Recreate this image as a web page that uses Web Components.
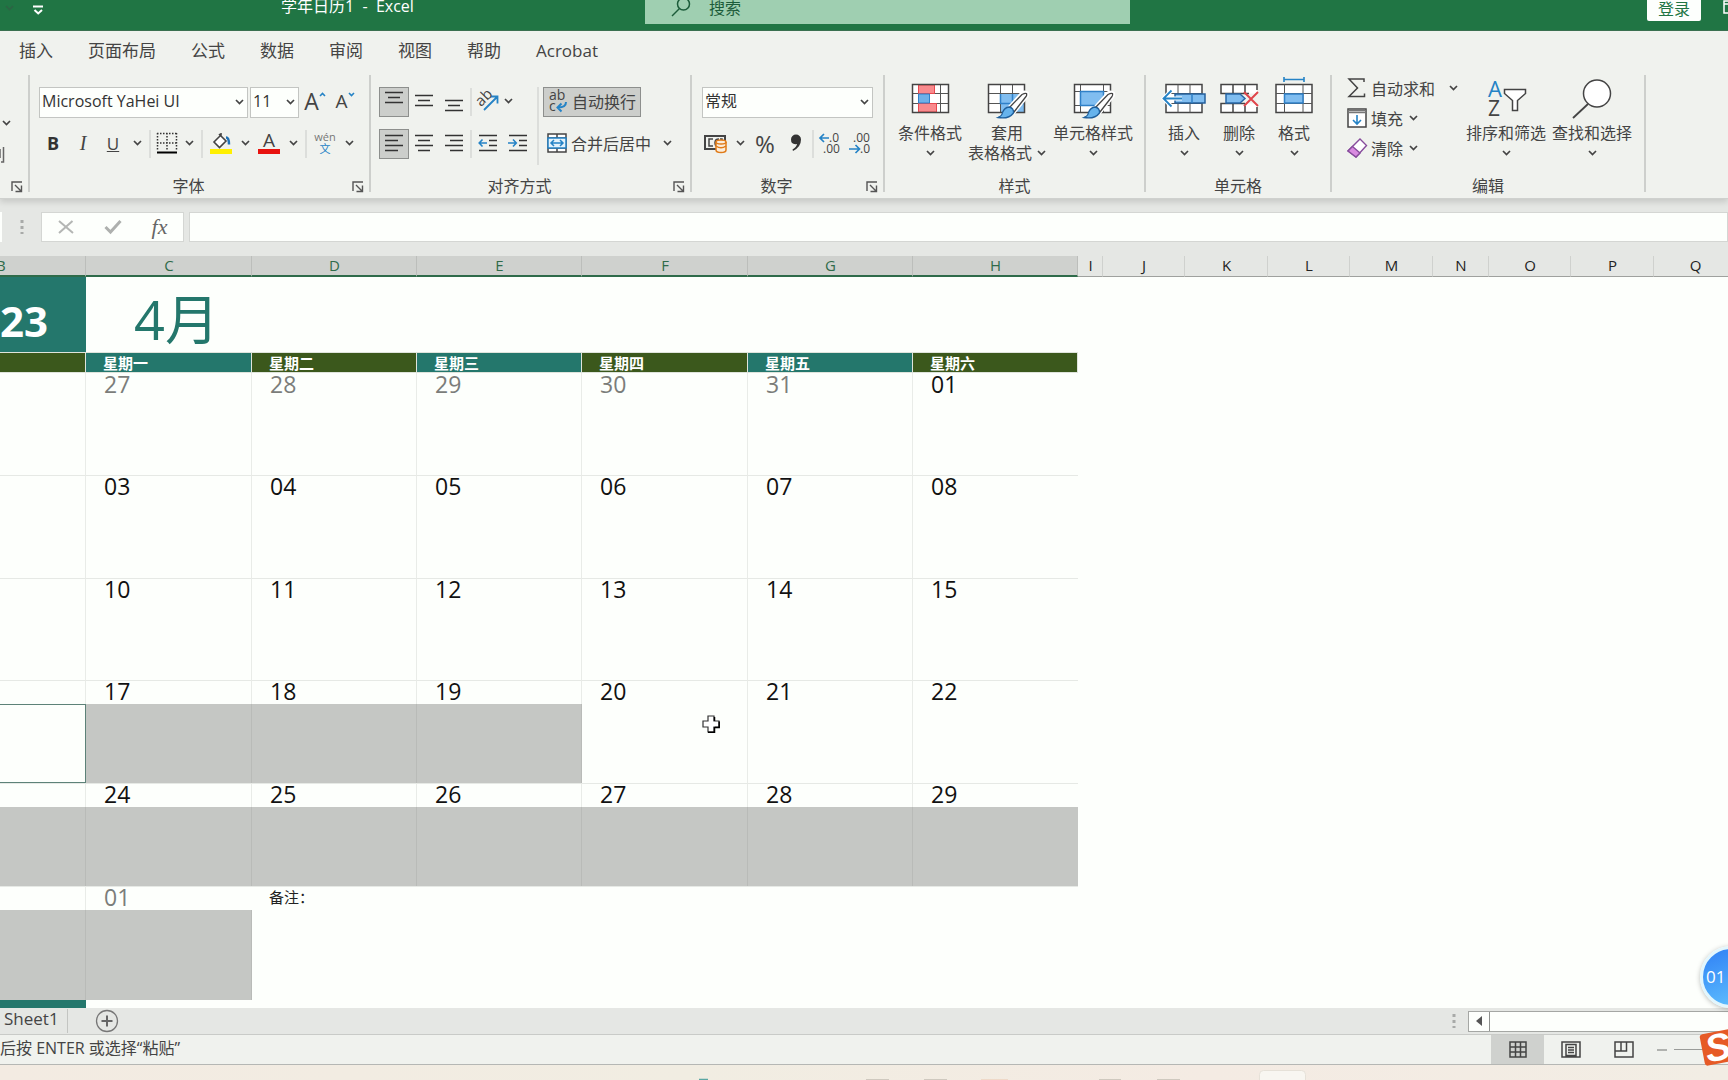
<!DOCTYPE html>
<html lang="zh-CN">
<head>
<meta charset="utf-8">
<title>学年日历1 - Excel</title>
<style>
html,body{margin:0;height:100%;overflow:hidden}
body{font-family:"Open Sans","Noto Sans CJK SC",sans-serif;font-size:16px;color:#444}
</style>
</head>
<body>
<excel-app></excel-app>
<script>
const ICONS = {
  chev: [9,6,'<path d="M1 1l3.500 3.500L8 1" stroke="#444" stroke-width="1.700"/>'],
  grow: [7,5,'<path d="M1 4l2.500-2.500L6 4" stroke="#2583c6" stroke-width="1.600"/>'],
  shrink: [7,5,'<path d="M1 1l2.500 2.500L6 1" stroke="#2583c6" stroke-width="1.600"/>'],
  qat: [11,10,'<path d="M0 1.500h10M1.500 5l3.700 3.500L9 5" stroke="#fff" stroke-width="2"/>'],
  search: [20,20,'<circle cx="12.500" cy="7" r="6" stroke="#1c5c3a" stroke-width="1.500"/><path d="M8.500 11.500L1 19" stroke="#1c5c3a" stroke-width="1.500"/>'],
  win: [14,14,'<path d="M1 1h13v12H1zM1 4h13" stroke="#fff" stroke-width="1.500"/>'],
  launch: [12,12,'<path d="M1 10V1h10M4 4l6 6M10.500 4.500v6h-6" stroke="#555" stroke-width="1.400"/>'],
  brush: [5,16,'<path d="M3.500 0v15H1M0 2v9" stroke="#666" stroke-width="1.500"/>'],
  borders: [22,22,'<path d="M1 1.500h20M1 11h20M1.500 1v18M11 1v18M20.500 1v18" stroke="#333" stroke-width="1.500" stroke-dasharray="1.500 1.500"/><path d="M1 20.500h20" stroke="#000" stroke-width="2"/>'],
  fill: [22,22,'<path d="M9 2l7 7-6.500 6.500L4 10l7-7V1" stroke="#444" stroke-width="1.600" fill="#fff"/><path d="M16 5.500q3 0 3 7" stroke="#1f72b8" stroke-width="2.500"/><path d="M0 17h22v5H0z" fill="#fff000"/>'],
  top: [20,20,'<path d="M1 1.500h18M4 6.500h12M1 11.500h18" stroke="#333" stroke-width="1.500"/>'],
  mid: [20,20,'<path d="M1 4.500h18M4 9.500h12M1 14.500h18" stroke="#333" stroke-width="1.500"/>'],
  bot: [20,20,'<path d="M1 9.500h18M4 14.500h12M1 19.500h18" stroke="#333" stroke-width="1.500"/>'],
  left: [20,20,'<path d="M1 2.500h18M1 7.500h13M1 12.500h18M1 17.500h13" stroke="#333" stroke-width="1.500"/>'],
  center: [20,20,'<path d="M1 2.500h18M4 7.500h12M1 12.500h18M4 17.500h12" stroke="#333" stroke-width="1.500"/>'],
  right: [20,20,'<path d="M1 2.500h18M6 7.500h13M1 12.500h18M6 17.500h13" stroke="#333" stroke-width="1.500"/>'],
  outdent: [20,20,'<path d="M1 2.500h18M11 7.500h8M11 12.500h8M1 17.500h18" stroke="#333" stroke-width="1.500"/><path d="M9 10H1.500M4.500 6.500L1.200 10l3.300 3.500" stroke="#2583c6" stroke-width="1.600"/>'],
  indent: [20,20,'<path d="M1 2.500h18M11 7.500h8M11 12.500h8M1 17.500h18" stroke="#333" stroke-width="1.500"/><path d="M0 10h8M5 6.500L8.300 10 5 13.500" stroke="#2583c6" stroke-width="1.600"/>'],
  orient: [24,24,'<path d="M8 21L21 8M14.500 7.500h7v7" stroke="#2583c6" stroke-width="1.800"/><text x="2" y="17" transform="rotate(-45 5 14)" font-size="15" fill="#444">ab</text>'],
  wrap: [20,22,'<text x="1" y="10" font-size="14" fill="#444">ab</text><text x="1" y="21" font-size="14" fill="#444">c</text><path d="M18 12q0 5.500-8 5.500M13.500 13.500l-4 4 4 4" stroke="#2583c6" stroke-width="2"/>'],
  merge: [20,20,'<path d="M1 1h18v18H1zM1 5h18M1 15h18M10 1v4M10 15v4" stroke="#444" stroke-width="1.500" fill="#fff"/><path d="M1 5h18v10H1z" stroke="#2583c6" stroke-width="1.500" fill="#e3f2fb"/><path d="M4 10h12M7 7l-3 3 3 3M13 7l3 3-3 3" stroke="#2583c6" stroke-width="1.500"/>'],
  money: [24,20,'<path d="M1 3h20v13H1z" stroke="#444" stroke-width="2"/><path d="M9 6H5v7h4M15 6q-4 0-4 3.500t2 3.500M16 6h2v2" stroke="#444" stroke-width="1.500"/><path d="M12 9v8q0 2.500 5 2.500t5-2.500V9" fill="#fbeedd" stroke="#e07b18" stroke-width="1.500"/><ellipse cx="17" cy="9" rx="5" ry="2" fill="#fbeedd" stroke="#e07b18" stroke-width="1.500"/><path d="M12 13q5 3.500 10 0" stroke="#e07b18" stroke-width="1.500"/>'],
  comma: [12,18,'<path d="M1 5.500a5 5 0 0 1 10 0Q11 13 3 17L2.500 15.500Q6.500 13 7 10 1 11 1 5.500z" fill="#333"/>'],
  decinc: [22,22,'<path d="M10 6H1M5 2L1 6l4 4" stroke="#2583c6" stroke-width="1.700"/><text x="10" y="10" font-size="12" fill="#444">.0</text><text x="4" y="21" font-size="12" fill="#444">.00</text>'],
  decdec: [22,22,'<path d="M0 17h10M6.500 13l4 4-4 4" stroke="#2583c6" stroke-width="1.700"/><text x="4" y="10" font-size="12" fill="#444">.00</text><text x="11" y="21" font-size="12" fill="#444">.0</text>'],
  cond: [44,40,'<path d="M4.500 6.500h36v28h-36z" fill="#fff"/><path d="M10.500 6.500v28M32.500 6.500v28M4.500 15.500h36M4.500 25.500h36" stroke="#555"/><path d="M10.500 7h16v8.500h-16zM10.500 25.500h18V34h-18z" fill="#f98a8d" stroke="#e8484f"/><path d="M10.500 16h11v9h-11z" fill="#6fb0e8" stroke="#2f80c8"/><path d="M4.500 6.500h36v28h-36z" stroke="#444" stroke-width="1.500"/>'],
  tablefmt: [44,40,'<path d="M3.500 6.500h36v28h-36z" fill="#fff"/><path d="M15 16h24.500v18.500H15z" fill="#80bdf0"/><path d="M15.500 6.500v28M27.500 6.500v28M3.500 15.500h36M3.500 25.500h36" stroke="#555"/><path d="M15.500 16v9.500h24M27.500 16v18" stroke="#2f80c8" stroke-width="1.500"/><path d="M3.500 6.500h36v28h-36z" stroke="#444" stroke-width="1.500"/><path d="M24 30L37 15.500q3-2 5 0 .5 2-1 3.500L29 34z" fill="#fff" stroke="#fff" stroke-width="4"/><path d="M24 30L37 16.500q3-1.500 4.500-1 .5 2-.5 3L29 34z" fill="#fff" stroke="#444" stroke-width="1.300"/><path d="M24 29q5 1 4.500 6-5 6.500-15.500 4.500 4-1.500 4.500-5 2-5 6.500-5.500z" fill="#66b3ec" stroke="#1f5f9c" stroke-width="1.300"/>'],
  cellstyle: [44,40,'<path d="M3.500 6.500h36v28h-36z" fill="#fff"/><path d="M9.500 6.500v28M32.500 6.500v28M3.500 13.500h36M3.500 27.500h36" stroke="#555"/><path d="M9.500 13.500h23v14h-23z" fill="#80bdf0" stroke="#2f80c8" stroke-width="1.500"/><path d="M3.500 6.500h36v28h-36z" stroke="#444" stroke-width="1.500"/><path d="M24 30L37 15.500q3-2 5 0 .5 2-1 3.500L29 34z" fill="#fff" stroke="#fff" stroke-width="4"/><path d="M24 30L37 16.500q3-1.500 4.500-1 .5 2-.5 3L29 34z" fill="#fff" stroke="#444" stroke-width="1.300"/><path d="M24 29q5 1 4.500 6-5 6.500-15.500 4.500 4-1.500 4.500-5 2-5 6.500-5.500z" fill="#66b3ec" stroke="#1f5f9c" stroke-width="1.300"/>'],
  insert: [44,40,'<path d="M4 6.500h36v28H4z" fill="#fff" stroke="#444" stroke-width="1.500"/><path d="M16 6.500v28M28 6.500v28M4 15.500h36M4 25.500h36" stroke="#555"/><path d="M13 16h30v9H13z" fill="#80bdf0" stroke="#24609c" stroke-width="1.500"/><path d="M30 16v9" stroke="#2f80c8" stroke-width="1.500"/><path d="M2 20.500h18M9.500 12.500l-8 8 8 8" stroke="#fff" stroke-width="4"/><path d="M2 20.500h18M9.500 12.500l-8 8 8 8" stroke="#2583c6" stroke-width="1.800"/>'],
  del: [44,40,'<path d="M4 6.500h36v9H4zM4 25.500h36v9H4z" fill="#fff"/><path d="M40 12V6.500H4v9h28M40 29v5.500H4v-9h24M16 6.500v9M28 6.500v9M16 25.500v9M28 28v6" stroke="#444" stroke-width="1.500"/><path d="M9 16h14l5 4.500-5 4.500H9z" fill="#80bdf0" stroke="#2868a8" stroke-width="1.500"/><path d="M27 14l14 14M41 14L27 28" stroke="#e0454b" stroke-width="2"/>'],
  format: [44,40,'<path d="M4 6.500h36v28H4z" fill="#fff" stroke="#444" stroke-width="1.500"/><path d="M12.500 6.500v28M31 6.500v28M4 15.500h36M4 25.500h36" stroke="#555"/><path d="M12.500 16H31v9H12.500z" fill="#80bdf0" stroke="#2f80c8" stroke-width="1.500"/><path d="M12 1.500h20M12 -1v5M32 -1v5" stroke="#2583c6" stroke-width="1.600"/>'],
  sigma: [20,20,'<path d="M17 4V1H2l8.500 9L2 18.500h15.500v-3" stroke="#444" stroke-width="1.500"/>'],
  filldown: [20,20,'<path d="M1 1h18v18H1z" fill="#fff" stroke="#444" stroke-width="1.500"/><path d="M1 4.500h18M1 2.500h18" stroke="#777" stroke-width="1.500"/><path d="M10 7v9M6 12l4 4 4-4" stroke="#2583c6" stroke-width="1.600"/>'],
  eraser: [20,20,'<path d="M13 1l6.500 6.500L9 19l-8-6z" fill="#fff" stroke="#874c9c" stroke-width="1.400"/><path d="M5.500 8.500L13 15 9 19l-8-6z" fill="#d98be0" stroke="#874c9c" stroke-width="1.400"/>'],
  sort: [44,40,'<text x="4" y="19" font-size="22" fill="#2583c6">A</text><text x="4" y="38" font-size="21" fill="#444">Z</text><path d="M20.500 11.500h21v4l-8 7v10h-5v-10l-8-7z" fill="#fff" stroke="#444" stroke-width="1.500"/>'],
  find: [44,40,'<circle cx="27" cy="15.500" r="13.500" fill="#fff" stroke="#444" stroke-width="1.500"/><path d="M18 26L3 40" stroke="#444" stroke-width="1.800"/>'],
  dots: [4,16,'<path d="M2 1v14" stroke="#a8aaa8" stroke-width="3" stroke-dasharray="3 3"/>'],
  cross: [18,16,'<path d="M2 2l14 12M15.500 2L2 14" stroke="#b4b6b4" stroke-width="2"/>'],
  check: [18,16,'<path d="M1.500 8l5 5L16.500 2" stroke="#aeb0ae" stroke-width="3"/>'],
  plus: [24,24,'<circle cx="12" cy="12" r="10.500" stroke="#777" stroke-width="1.300"/><path d="M12 6.500v11M6.500 12h11" stroke="#666" stroke-width="2"/>'],
  arrow: [8,12,'<path d="M7 1v10L1 6z" fill="#555"/>'],
  vgrid: [18,17,'<path d="M1 1h16v15H1zM6.500 1v15M11.500 1v15M1 6h16M1 11h16" stroke="#444" stroke-width="1.500"/>'],
  vpage: [20,17,'<path d="M1 1h18v15H1zM5 3.500h10v11H5zM7 6.500h6M7 9h6M7 11.500h6" stroke="#444" stroke-width="1.500"/>'],
  vbreak: [20,17,'<path d="M1 1h18v15H1zM7 1v9M12.500 1v9H1" stroke="#444" stroke-width="1.500"/>'],
  cell: [18,18,'<path d="M6 1h6v5h5v6h-5v5H6v-5H1V6h5z" fill="#fff" stroke="#333" stroke-width="1.200"/><path d="M12.500 2v4M17.200 6.500v6H13M12.500 12v5.200H6" stroke="#000" stroke-width="1.500"/>']
};
const define = (tag, css, render) => customElements.define(tag, class extends HTMLElement {
  connectedCallback() {
    if (this.shadowRoot) return;
    const root = this.attachShadow({mode: 'open'});
    const t = document.createElement('template');
    t.innerHTML = `<style>*{box-sizing:border-box}button,input,select{font:inherit;color:inherit;border:0;padding:0;margin:0;background:none;border-radius:0;outline:0}${css}</style>${render(this)}`;
    root.append(t.content.cloneNode(true));
  }
});
define('x-icon', ':host{display:inline-flex;flex:none}svg{display:block;overflow:visible}', el => {
  const [w, h, body] = ICONS[el.getAttribute('name')];
  return `<svg width="${w}" height="${h}" viewBox="0 0 ${w} ${h}" fill="none" aria-hidden="true">${body}</svg>`;
});
// Small ribbon button; the slot takes a label or a letter glyph.
define('tool-button', `:host{display:block;flex:none;width:28px;height:30px}
:host([wide]){width:30px}:host([snug]){width:24px}:host([drop]){width:16px}:host([auto]){width:auto}
button{width:100%;height:100%;display:flex;align-items:center;justify-content:center;gap:4px;padding-bottom:2px;white-space:nowrap}
:host([auto]) button{padding:0 4px 2px}
:host([on]) button{background:#cccecb;border:1px solid #8d8f8d}`,
  el => `<button type="button" aria-label="${el.getAttribute('label') || ''}">${el.hasAttribute('icon') ? `<x-icon name="${el.getAttribute('icon')}"></x-icon>` : ''}<slot></slot></button>`);
define('tool-sep', ':host{display:block;flex:none;width:2px;height:28px;background:#dcdedb}:host([tall]){height:78px}', () => '');
define('big-button', `:host{display:block;flex:none}button{width:100%;display:flex;flex-direction:column;align-items:center;line-height:20px;white-space:nowrap}
x-icon{margin-bottom:5px}.d{height:20px;display:flex;align-items:center;gap:5px}`,
  el => `<button type="button"><x-icon name="${el.getAttribute('icon')}"></x-icon><slot></slot><span class="d"><slot name="second"></slot><x-icon name="chev" style="margin:0"></x-icon></span></button>`);
define('drop-select', `:host{display:grid;height:31px}select,x-icon{grid-area:1/1}
select{appearance:none;width:100%;height:31px;background:#fdfffc;border:1px solid #c3c5c2;padding:0 2px 3px;color:#333}
x-icon{place-self:center end;margin-right:4px;pointer-events:none}`,
  el => `<select aria-label="${el.getAttribute('label')}"><option>${el.getAttribute('value')}</option></select><x-icon name="chev"></x-icon>`);
define('ribbon-group', `:host{display:flex;flex:none;height:123px}
.c{flex:1;min-width:0;display:flex;flex-direction:column}.b{flex:1;min-height:0}
.f{display:flex;height:20px;line-height:16px}.f span{flex:1;text-align:center}
.f button{width:22px;height:18px;display:flex;align-items:center;justify-content:center}
.s{width:2px;height:117px;background:#cdcfcc}`,
  el => `<div class="c"><div class="b"><slot></slot></div><div class="f"><span>${el.getAttribute('label') || ''}</span>${el.hasAttribute('launcher') ? '<button type="button" aria-label="更多设置"><x-icon name="launch"></x-icon></button>' : ''}</div></div><div class="s"></div>`);

define('title-bar', `:host{display:grid;grid-template-columns:645px minmax(0,485px) 1fr;height:31px;background:#207544;color:#fff;border-bottom:1px solid #3a7050}
.l{display:flex;align-items:flex-start;padding:5px 0 0 5px}.l x-icon:first-child{opacity:.35;margin-right:19px}.t{margin:-10px 0 0 237px;line-height:22px;white-space:pre}
.s{display:flex;gap:18px;background:#9fcfb1;height:24px;padding-left:26px;align-items:flex-start;color:#1c5c3a}
.s x-icon{margin-top:-3px}.s input{height:24px;width:300px;margin-top:-4px}.s input::placeholder{color:#1c5c3a;opacity:1}
.r{display:flex;justify-content:flex-end;align-items:flex-start;gap:22px}
.r button{width:54px;height:21px;background:#fdfffd;color:#207544;border-radius:0 0 2px 2px;line-height:16px;padding-bottom:4px}
.r i{display:flex;width:5px;overflow:hidden}`,
  () => `<div class="l"><x-icon name="chev"></x-icon><x-icon name="qat"></x-icon><span class="t">学年日历1  -  Excel</span></div>
<label class="s"><x-icon name="search"></x-icon><input type="search" placeholder="搜索" aria-label="搜索"></label>
<div class="r"><button type="button">登录</button><i><x-icon name="win"></x-icon></i></div>`);

define('ribbon-tabs', `:host{display:block;background:#f0f2ee}nav{display:flex;gap:35px;height:44px;padding:8px 0 0 19px;font-size:17px;line-height:24px}a{color:#444;text-decoration:none;white-space:nowrap}`,
  () => `<nav>${['插入','页面布局','公式','数据','审阅','视图','帮助','Acrobat'].map(t => `<a href="#">${t}</a>`).join('')}</nav>`);

define('excel-ribbon', `:host{display:flex;background:#f0f2ee;border-bottom:1px solid #cfd1ce;position:relative;box-shadow:0 3px 6px #0002;clip-path:inset(0 0 -10px 0)}
.row{display:flex;align-items:center;height:30px;gap:2px}.row+.row{margin-top:12px}.p{padding:12px 0 0 9px}
.font tool-sep{margin:0 2px}.font b{font-size:18px;color:#333}.font i{font:italic 20px "Liberation Serif",serif}.font u{font-size:17px}
.A{display:flex;align-items:flex-start;font-size:23px;line-height:24px}.A.s{font-size:19px}.A x-icon{margin:3px 0 0 0}
.fc{display:flex;flex-direction:column;width:22px;font-size:19px;line-height:16px;align-items:center;border-bottom:5px solid #e8120e;height:22px}
.wen{display:flex;flex-direction:column;align-items:center;font-size:11px;line-height:10px;color:#777}.wen span{color:#2583c6;line-height:13px}
.al{display:flex;padding:12px 0 0 8px}.al .row{gap:0}.al .c1{width:158px}.al .c1 tool-sep{margin:0 1px}.al .c1 tool-button[drop]{margin-left:-3px}.al .c2{padding-left:4px}
.num{padding:12px 0 0 10px}.num drop-select{width:171px}.pct{font-size:24px}
.big{display:flex;padding-top:3px}
.ed{display:flex}.ed .c1{width:120px;margin-top:-1px}.ed .row{gap:0;margin:0}.ed .row tool-button[drop]{margin-left:-2px}.ed .row:first-child tool-button[drop]{margin-left:6px}`,
  () => { const drop = '<tool-button drop icon="chev" label="更多"></tool-button>', sep = '<tool-sep></tool-sep>';
  const tb = (icon, label, attr = '') => `<tool-button icon="${icon}" label="${label}" ${attr}></tool-button>`;
  return `
<ribbon-group launcher style="width:30px"><div style="padding-top:45px"><x-icon name="chev" style="margin-left:2px;display:flex"></x-icon><x-icon name="brush" style="margin-top:21px;display:flex"></x-icon></div></ribbon-group>
<ribbon-group label="字体" launcher style="width:341px"><div class="p font">
 <div class="row"><drop-select label="字体" value="Microsoft YaHei UI" style="width:209px"></drop-select><drop-select label="字号" value="11" style="width:49px"></drop-select>
 <tool-button label="增大字号"><span class="A">A<x-icon name="grow"></x-icon></span></tool-button><tool-button label="减小字号"><span class="A s">A<x-icon name="shrink"></x-icon></span></tool-button></div>
 <div class="row"><tool-button label="加粗"><b>B</b></tool-button><tool-button label="倾斜"><i>I</i></tool-button><tool-button label="下划线"><u>U</u></tool-button>${drop}${sep}
 ${tb('borders','边框','snug')}${drop}${sep}${tb('fill','填充颜色')}${drop}<tool-button label="字体颜色"><span class="fc">A</span></tool-button>${drop}${sep}<tool-button label="拼音"><span class="wen">wén<span>文</span></span></tool-button>${drop}</div></div></ribbon-group>
<ribbon-group label="对齐方式" launcher style="width:321px"><div class="al">
 <div class="c1"><div class="row">${tb('top','顶端对齐','wide on')}${tb('mid','垂直居中','wide')}${tb('bot','底端对齐','wide')}${sep}${tb('orient','方向','wide')}${drop}</div>
 <div class="row">${tb('left','左对齐','wide on')}${tb('center','居中','wide')}${tb('right','右对齐','wide')}${sep}${tb('outdent','减少缩进','wide')}${tb('indent','增加缩进','wide')}</div></div>
 <tool-sep tall></tool-sep><div class="c2"><div class="row"><tool-button auto on icon="wrap" label="自动换行">自动换行</tool-button></div>
 <div class="row"><tool-button auto icon="merge" label="合并后居中">合并后居中</tool-button><tool-button drop icon="chev" label="更多" style="margin-left:4px"></tool-button></div></div></div></ribbon-group>
<ribbon-group label="数字" launcher style="width:193px"><div class="num"><div class="row"><drop-select label="数字格式" value="常规"></drop-select></div>
 <div class="row">${tb('money','会计数字格式')}${drop}<tool-button wide label="百分比"><span class="pct">%</span></tool-button>${tb('comma','千位分隔')}${sep}${tb('decinc','增加小数位数')}${tb('decdec','减少小数位数')}</div></div></ribbon-group>
<ribbon-group label="样式" style="width:261px"><div class="big" style="padding-left:7px"><big-button icon="cond" style="width:76px">条件格式</big-button><big-button icon="tablefmt" style="width:78px">套用<span slot="second">表格格式</span></big-button><big-button icon="cellstyle" style="width:94px">单元格样式</big-button></div></ribbon-group>
<ribbon-group label="单元格" style="width:186px"><div class="big" style="padding-left:11px"><big-button icon="insert" style="width:54px">插入</big-button><big-button icon="del" style="width:56px">删除</big-button><big-button icon="format" style="width:54px">格式</big-button></div></ribbon-group>
<ribbon-group label="编辑" style="width:314px"><div class="ed" style="padding-left:11px"><div class="c1"><div class="row"><tool-button auto icon="sigma" label="自动求和">自动求和</tool-button>${drop}</div>
 <div class="row"><tool-button auto icon="filldown" label="填充">填充</tool-button>${drop}</div><div class="row"><tool-button auto icon="eraser" label="清除">清除</tool-button>${drop}</div></div>
 <div class="big"><big-button icon="sort" style="width:86px">排序和筛选</big-button><big-button icon="find" style="width:86px">查找和选择</big-button></div></div></ribbon-group>`; });

define('formula-bar', `:host{display:flex;height:57px;padding:13px 0 14px;background:#e5e7e4;align-items:stretch}
.n{width:2px;background:#fdfffc}.d{width:39px;display:flex;align-items:center;justify-content:center}
.b{display:flex;width:143px;background:#fdfffc;border:1px solid #d4d6d3}.b button{flex:1;display:flex;align-items:center;justify-content:center;font:italic 22px "Liberation Serif",serif;color:#666}
input{flex:1;min-width:0;margin-left:5px;background:#fdfffc;border:1px solid #d4d6d3;padding:0 6px}`,
  () => `<div class="n"></div><div class="d"><x-icon name="dots"></x-icon></div><div class="b"><button type="button" aria-label="取消"><x-icon name="cross"></x-icon></button><button type="button" aria-label="输入"><x-icon name="check"></x-icon></button><button type="button" aria-label="插入函数">fx</button></div><input type="text" aria-label="编辑栏">`);

define('calendar-sheet', `:host{display:block;min-height:0;overflow:hidden;background:#fdfffc;color:#111;position:relative}
table{border-collapse:separate;border-spacing:0;table-layout:fixed;width:1737px}
td,th{padding:0;font-weight:400;white-space:nowrap;text-align:left}
.h th{height:21px;line-height:16px;padding:0 0 2px 1px;font-size:15px;text-align:center;background:#e5e7e4;border-right:1px solid #cfd1ce;border-bottom:1px solid #9fa19e;color:#222}
.h th.s{background:#cfd1ce;border-right-color:#bcbebb;border-bottom:2px solid #2f6b4a;color:#2f6b4a}
.h th:first-child{text-align:left;text-indent:-5px}
.t td{height:75px}.t .y{background:#24776c;color:#fff;font-size:42px;font-weight:700;line-height:40px;padding:12px 0 0}
.t .m{color:#24776c;font-size:54px;line-height:66px;padding:8px 0 0 48px}
.w th{height:21px;line-height:18px;font-size:15px;font-weight:700;color:#fff;padding:1px 0 0 17px;border:1px solid #dfe4dc;border-width:1px 1px 1px 0;background:#24776c}
.w th.g{background:#3b581c}.w th:last-child{background:none;border:0}
.n td{height:24px;line-height:21px;font-size:23px;padding:0 0 2px 18px;border-top:1px solid #e6e9e5}
.n td,.b td{border-right:1px solid #e9ece8}.n .x{color:#7b7d7a}.n.first td{border-top:0}
.b td{height:79px}.b.short td{height:78px}.b .s{background:#c5c7c4;border-right-color:#b9bbb8}
.b .a{border:1px solid #5d8278;border-left:0}.last td{height:90px}.n td.e,.b td.e{border-right:0}
.n td.note{font-size:15px;color:#222;padding-left:17px}.z td{height:12px}.z .y{background:#24776c}
.cur{position:absolute;left:702px;top:459px}`,
  () => {
    const cols = [86,166,165,165,166,165,165,25,82,83,82,83,56,82,83,83];
    const letters = 'BCDEFGHIJKLMNOPQ'.split('');
    const week = (i, days, dim, sel, cls = '') => `<tr class="n ${i ? '' : 'first'}"><td></td>${days.map((d, k) => `<td class="${dim.includes(k) ? 'x' : ''} ${k == 5 ? 'e' : ''}">${d}</td>`).join('')}</tr><tr class="b ${cls}">${[0,1,2,3,4,5,6].map(k => `<td class="${sel.includes(k) ? 's' : ''} ${i == 3 && !k ? 'a' : ''} ${k == 6 ? 'e' : ''}"></td>`).join('')}</tr>`;
    return `<table><colgroup>${cols.map(c => `<col style="width:${c}px">`).join('')}</colgroup>
<tr class="h">${letters.map((l, i) => `<th scope="col" class="${i < 7 ? 's' : ''}">${l}</th>`).join('')}</tr>
<tr class="t"><td class="y">23</td><td class="m" colspan="6">4月</td></tr>
<tr class="w">${['','星期一','星期二','星期三','星期四','星期五','星期六'].map((d, i) => `<th scope="col" class="${i % 2 ? '' : 'g'}">${d}</th>`).join('')}<th colspan="9"></th></tr>
${week(0,['27','28','29','30','31','01'],[0,1,2,3,4],[],'short')}${week(1,['03','04','05','06','07','08'],[],[])}${week(2,['10','11','12','13','14','15'],[],[],'short')}
${week(3,['17','18','19','20','21','22'],[],[1,2,3])}${week(4,['24','25','26','27','28','29'],[],[0,1,2,3,4,5,6])}
<tr class="n"><td></td><td class="x e">01</td><td class="note e" colspan="5">备注：</td></tr><tr class="b last"><td class="s"></td><td class="s"></td></tr><tr class="z"><td class="y"></td></tr></table><x-icon class="cur" name="cell"></x-icon>`; });

define('sheet-tabs', `:host{display:flex;justify-content:space-between;height:27px;background:#e5e7e4;border-bottom:1px solid #c9cbc8}
.l,.r{display:flex;align-items:center}.l a{font-size:17px;line-height:20px;color:#444;text-decoration:none;padding:0 8px 4px 4px;border-right:1px solid #c3c5c2}
.l button{margin:0 0 0 27px;display:flex}.r{width:276px;gap:12px}.bar{flex:1;display:flex;height:21px;border:1px solid #a5a7a4;border-right:0;background:#fdfffc}
.bar button{width:21px;border-right:1px solid #8f918e;display:flex;align-items:center;justify-content:center}`,
  () => `<div class="l"><a href="#">Sheet1</a><button type="button" aria-label="新工作表"><x-icon name="plus"></x-icon></button></div><div class="r"><x-icon name="dots"></x-icon><div class="bar"><button type="button" aria-label="向左滚动"><x-icon name="arrow"></x-icon></button></div></div>`);

define('status-bar', `:host{display:flex;justify-content:space-between;height:30px;background:#f0f2ee;border-bottom:1px solid #b5b7b4;line-height:27px;white-space:nowrap}
.r{display:flex;align-items:center;width:237px}.r button{width:53px;height:29px;display:flex;align-items:center;justify-content:center}.r .on{background:#cfd1ce}
.m{width:10px;height:2px;background:#b0b2af;margin:0 7px 0 7px}.t{flex:1;height:1px;background:#9a9c99}`,
  () => `<span>后按 ENTER 或选择“粘贴”</span><div class="r"><button type="button" class="on" aria-label="普通"><x-icon name="vgrid"></x-icon></button><button type="button" aria-label="页面布局"><x-icon name="vpage"></x-icon></button><button type="button" aria-label="分页预览"><x-icon name="vbreak"></x-icon></button><div class="m"></div><div class="t"></div></div>`);

define('task-bar', ':host{display:block;height:15px;background:linear-gradient(90deg,#f3ebe2,#f1ede2 40%,#f4ebe3 70%,#f2ede4);overflow:hidden}svg{display:block}',
  () => `<svg width="1728" height="15" aria-hidden="true"><rect x="1259.500" y="5.500" width="46" height="20" rx="4" fill="#f8f6f1" stroke="#e6e1d8"/><path d="M699 14.500h9" stroke="#5aa7a3" stroke-width="1.500"/><path d="M866 14.500h23M924 14.500h23M1099 14.500h22M1157 14.500h23" stroke="#cfc9bf"/><path d="M981 14.500h27" stroke="#efd9c8"/></svg>`);

// Floating recorder timer and input-method badge at the window's right edge.
define('floating-badges', `:host{position:absolute;right:0;bottom:12px;width:34px;height:128px;overflow:hidden}
.c{position:absolute;left:6px;top:6px;width:62px;height:62px;border-radius:50%;border:3px solid #e2f6fd;background:linear-gradient(160deg,#2f80f5,#62c4ff);color:#fff;font-size:17px;line-height:56px;padding-left:3px;box-shadow:0 1px 5px #0004}
.s{position:absolute;left:8px;top:91px;width:36px;height:32px;background:#e65a26;border-radius:3px;rotate:-11deg;color:#fff;font:bold italic 38px/32px "Liberation Sans",sans-serif;padding-left:3px}`,
  () => '<div class="c">01</div><div class="s">S</div>');

define('excel-app', ':host{display:flex;flex-direction:column;height:100vh;position:relative;overflow:hidden}title-bar,ribbon-tabs,excel-ribbon,formula-bar,sheet-tabs,status-bar,task-bar{flex:none}calendar-sheet{flex:1}excel-ribbon{z-index:1}',
  () => '<title-bar></title-bar><ribbon-tabs></ribbon-tabs><excel-ribbon></excel-ribbon><formula-bar></formula-bar><calendar-sheet></calendar-sheet><sheet-tabs></sheet-tabs><status-bar></status-bar><task-bar></task-bar><floating-badges></floating-badges>');
</script>
</body>
</html>
